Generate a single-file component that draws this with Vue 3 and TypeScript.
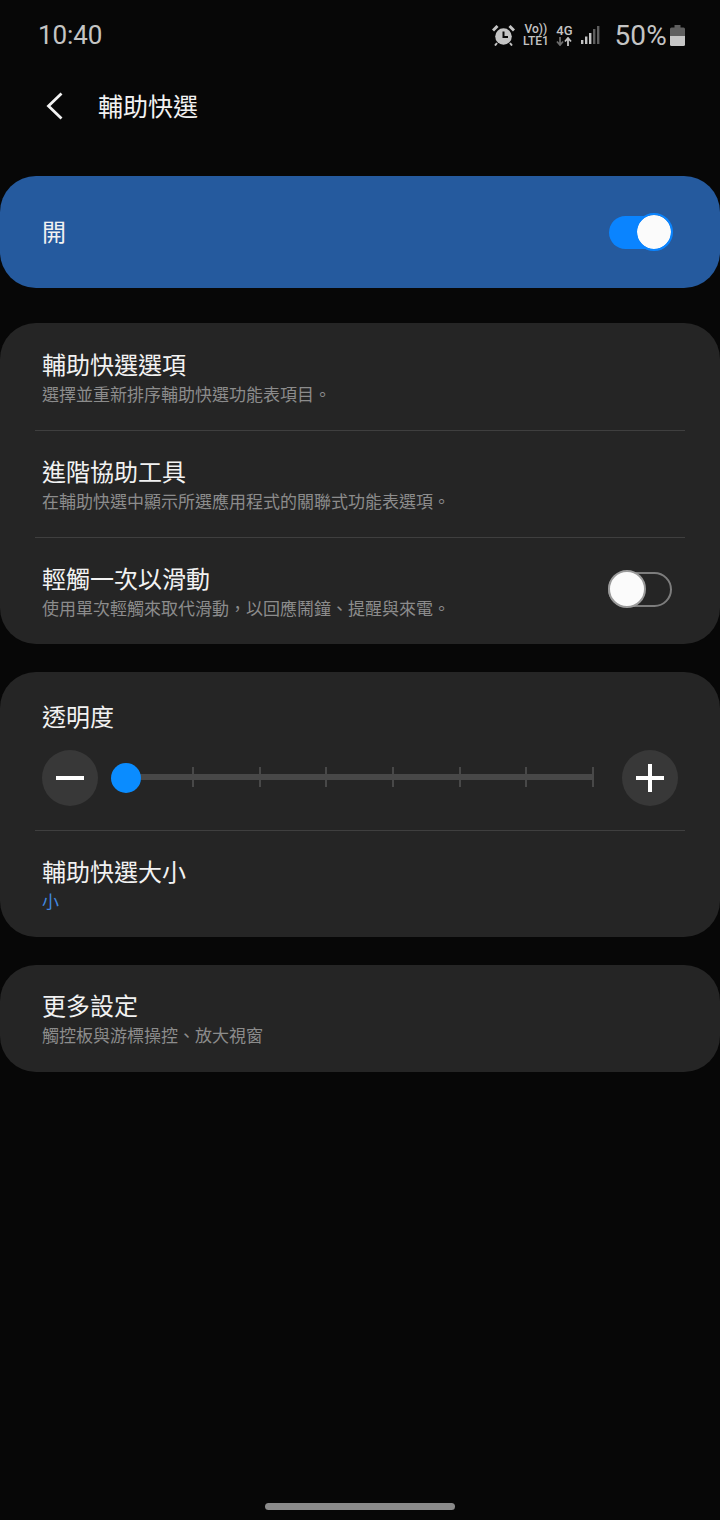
<script setup lang="ts">
const ticks = [0, 1, 2, 3, 4, 5, 6]

const shortcutRows = [
  { title: '輔助快選選項', sub: '選擇並重新排序輔助快選功能表項目。' },
  { title: '進階協助工具', sub: '在輔助快選中顯示所選應用程式的關聯式功能表選項。' },
]
</script>

<template>
  <div class="screen">
    <div class="status">
      <span class="status__time">10:40</span>
      <div class="status__icons">
        <svg class="alarm" width="23" height="21" viewBox="0 0 23 21">
          <circle cx="11.5" cy="11.500" r="8.300" fill="#c4c4c4" />
          <path d="M11.500 6.500v5.500h4.500" fill="none" stroke="#080808" stroke-width="2" />
          <path d="M1 5.500 5.500 1M22 5.500 17.500 1" stroke="#c4c4c4" stroke-width="3" />
          <path d="M5 18 3 20.500M18 18l2 2.500" stroke="#c4c4c4" stroke-width="2" />
        </svg>
        <div class="volte"><span>Vo))</span><span>LTE1</span></div>
        <div class="net">
          <span>4G</span>
          <svg width="16" height="9" viewBox="0 0 16 9">
            <path d="M4 0v7.500M1 4.500l3 3.500 3-3.500" fill="none" stroke="#6d6d6d" stroke-width="1.800" />
            <path d="M12 9V1.500M9 4.500l3-3.500 3 3.500" fill="none" stroke="#c4c4c4" stroke-width="1.800" />
          </svg>
        </div>
        <svg class="signal" width="19" height="20" viewBox="0 0 19 20">
          <rect x="0" y="15" width="2.400" height="4" fill="#c4c4c4" />
          <rect x="4" y="11.500" width="2.400" height="7.500" fill="#c4c4c4" />
          <rect x="8" y="8" width="2.400" height="11" fill="#c4c4c4" />
          <rect x="12" y="4" width="2.400" height="15" fill="#5e5e5e" />
          <rect x="16" y="1" width="2.400" height="18" fill="#5e5e5e" />
        </svg>
        <span class="status__pct">50%</span>
        <svg class="battery" width="15" height="21" viewBox="0 0 15 21">
          <rect x="4.500" y="0" width="6" height="3" fill="#5f5f5f" />
          <path d="M0 4a1.500 1.500 0 0 1 1.500-1.500h12A1.500 1.500 0 0 1 15 4v7H0z" fill="#5f5f5f" />
          <path d="M0 11h15v8.500a1.500 1.500 0 0 1-1.500 1.500h-12A1.500 1.500 0 0 1 0 19.500z" fill="#c6c6c6" />
        </svg>
      </div>
    </div>

    <header class="head">
      <svg class="head__back" width="18" height="28" viewBox="0 0 18 28">
        <path d="M16.500 1.500 3.500 14l13 12.500" fill="none" stroke="#f2f2f2" stroke-width="2.800" />
      </svg>
      <h1 class="head__title">輔助快選</h1>
    </header>

    <section class="master">
      <span class="master__label">開</span>
      <div class="switch switch--on"><i></i></div>
    </section>

    <section class="card card--first">
      <template v-for="row in shortcutRows" :key="row.title">
        <div class="row">
          <div class="row__title">{{ row.title }}</div>
          <div class="row__sub">{{ row.sub }}</div>
        </div>
        <div class="divider"></div>
      </template>
      <div class="row row--switch">
        <div>
          <div class="row__title">輕觸一次以滑動</div>
          <div class="row__sub">使用單次輕觸來取代滑動，以回應鬧鐘、提醒與來電。</div>
        </div>
        <div class="switch switch--off"><i></i></div>
      </div>
    </section>

    <section class="card">
      <div class="opacity">
        <div class="row__title">透明度</div>
        <div class="slider">
          <button class="round">
            <svg width="28" height="28" viewBox="0 0 28 28"><path d="M0 14h28" stroke="#fff" stroke-width="4" /></svg>
          </button>
          <div class="track">
            <div class="track__line"></div>
            <div class="track__ticks">
              <i v-for="t in ticks" :key="t"></i>
            </div>
            <div class="track__thumb"></div>
          </div>
          <button class="round">
            <svg width="28" height="28" viewBox="0 0 28 28"><path d="M0 14h28M14 0v28" stroke="#fff" stroke-width="4" /></svg>
          </button>
        </div>
      </div>
      <div class="divider"></div>
      <div class="row">
        <div class="row__title">輔助快選大小</div>
        <div class="row__sub row__sub--blue">小</div>
      </div>
    </section>

    <section class="card card--last">
      <div class="row">
        <div class="row__title">更多設定</div>
        <div class="row__sub">觸控板與游標操控、放大視窗</div>
      </div>
    </section>

    <div class="home"></div>
  </div>
</template>

<style>
html, body {
  margin: 0;
  background: #070707;
}
</style>

<style scoped>
.screen {
  position: relative;
  width: 720px;
  height: 1520px;
  overflow: hidden;
  background: #070707;
  color: #f2f2f2;
  font-family: "Noto Sans CJK TC", "Noto Sans", sans-serif;
}

.status {
  height: 70px;
  padding: 0 35px 0 38px;
  display: flex;
  justify-content: space-between;
  align-items: center;
  box-sizing: border-box;
  font-family: Roboto, sans-serif;
  color: #c4c4c4;
}

.status__time {
  font-size: 26px;
  letter-spacing: -0.1px;
}

.status__icons {
  display: flex;
  align-items: center;
}

.alarm {
  margin-right: 8px;
}

.volte {
  display: flex;
  flex-direction: column;
  align-items: center;
  width: 25px;
  font-size: 12px;
  font-weight: 500;
  line-height: 12px;
  margin-right: 8px;
}

.net {
  display: flex;
  flex-direction: column;
  align-items: center;
  width: 16px;
  font-size: 13px;
  font-weight: 500;
  line-height: 12px;
  margin-right: 9px;
}

.signal {
  margin-right: 14px;
}

.status__pct {
  font-size: 28px;
  letter-spacing: 0.2px;
  margin-right: 3px;
}

.head {
  height: 70px;
  padding-left: 45px;
  display: flex;
  align-items: center;
}

.head__back {
  margin: 2px 35px 0 0;
}

.head__title {
  margin: 0;
  font-size: 25px;
  font-weight: 400;
}

.master {
  margin-top: 36px;
  height: 112px;
  padding: 0 48px 0 42px;
  display: flex;
  justify-content: space-between;
  align-items: center;
  border-radius: 36px;
  background: #255a9e;
  font-size: 24px;
}

.master__label {
  margin-bottom: 4px;
}

.switch {
  position: relative;
  box-sizing: border-box;
}

.switch i {
  position: absolute;
  border-radius: 50%;
  background: #fbfbfb;
  box-sizing: border-box;
}

.switch--on {
  width: 63px;
  height: 33px;
  border-radius: 17px;
  background: #0a84ff;
}

.switch--on i {
  right: 1px;
  top: -1px;
  width: 34px;
  height: 34px;
  outline: 2px solid #0a84ff;
}

.switch--off {
  width: 64px;
  height: 35px;
  margin-top: 12px;
  border: 2px solid #7d7d7d;
  border-radius: 18px;
}

.switch--off i {
  left: -2px;
  top: -4px;
  width: 38px;
  height: 38px;
  border: 2px solid #9a9a9a;
}

.card {
  margin-top: 28px;
  border-radius: 36px;
  background: #252525;
}

.card--first {
  margin-top: 35px;
  padding-top: 1px;
}

.card--last {
  padding-bottom: 1px;
}

.row {
  height: 106px;
  padding: 22px 42px 0;
  box-sizing: border-box;
}

.row--switch {
  display: flex;
  justify-content: space-between;
  align-items: flex-start;
  padding-right: 48px;
}

.row__title {
  font-size: 24px;
  line-height: 36px;
  color: #f2f2f2;
}

.row__sub {
  font-size: 17px;
  line-height: 23px;
  color: #8c8c8c;
}

.row__sub--blue {
  color: #4289e0;
}

.divider {
  height: 1px;
  margin: 0 35px;
  background: #3f3f3f;
}

.opacity {
  height: 158px;
  padding: 26px 42px 0;
  box-sizing: border-box;
}

.slider {
  display: flex;
  align-items: center;
  margin-top: 16px;
}

.round {
  flex: none;
  width: 56px;
  height: 56px;
  padding: 0;
  border: none;
  border-radius: 50%;
  background: #383838;
  display: flex;
  align-items: center;
  justify-content: center;
}

.track {
  position: relative;
  flex: 1;
  height: 30px;
  margin: 0 28px 0 13px;
}

.track__line {
  position: absolute;
  left: 15px;
  right: 0;
  top: 11px;
  height: 6px;
  background: #484848;
}

.track__ticks {
  position: absolute;
  left: 81px;
  right: 0;
  top: 4px;
  display: flex;
  justify-content: space-between;
}

.track__ticks i {
  width: 2px;
  height: 20px;
  background: #484848;
}

.track__thumb {
  position: absolute;
  left: 0;
  top: 0;
  width: 30px;
  height: 30px;
  border-radius: 50%;
  background: #0a8cff;
}

.home {
  position: absolute;
  left: 265px;
  bottom: 10px;
  width: 190px;
  height: 7px;
  border-radius: 4px;
  background: #8a8a8a;
}
</style>
